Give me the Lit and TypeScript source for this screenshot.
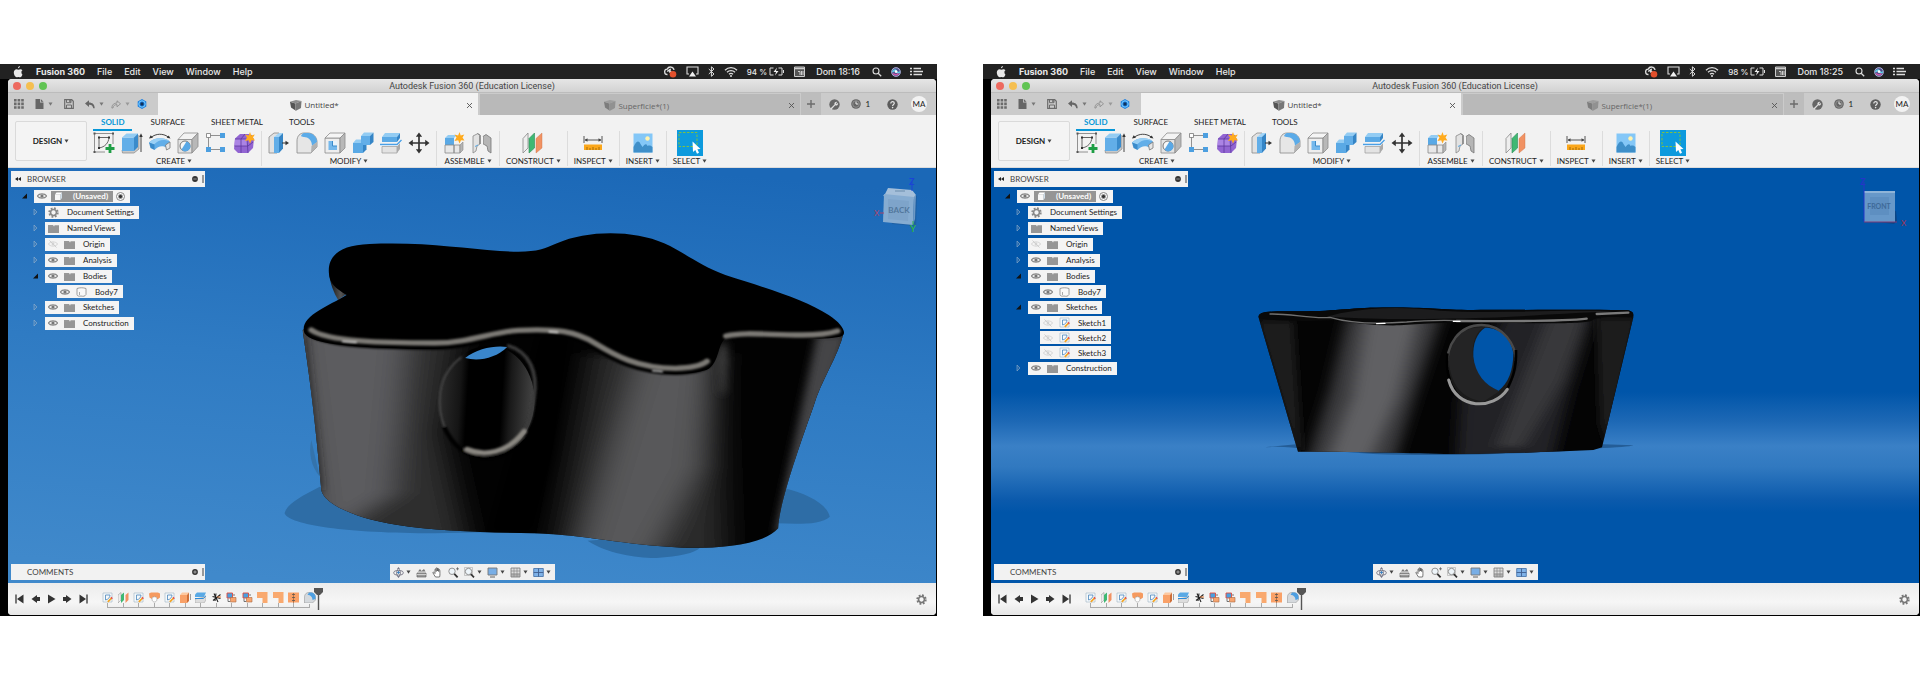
import { LitElement, html, svg, css, TemplateResult, SVGTemplateResult } from "lit";
import { customElement, property } from "lit/decorators.js";

const pic = (w: number, h: number, body: SVGTemplateResult, box = `0 0 ${w} ${h}`): TemplateResult =>
  html`<svg width=${w} height=${h} viewBox=${box} aria-hidden="true">${body}</svg>`;

/* ---------- menu bar glyphs ---------- */
const apple = pic(10, 12, svg`<path fill="#e8e8e8" d="M6.9 0c.1 1-.8 2.2-1.9 2.3C4.900 1.300 5.900.200 6.900 0zM8.400 6.100c0-1.200 1-1.700 1-1.800C8.800 3.500 8 3.300 7.500 3.300c-.9 0-1.600.5-2.100.5-.5 0-1.100-.5-1.900-.5C2.100 3.400.8 4.500.8 6.600c0 2.100 1.500 4.700 2.800 4.700.6 0 1-.4 1.900-.4.8 0 1.100.4 1.800.4 1 0 1.900-1.700 2.200-2.700-.1 0-1.100-.6-1.100-2.500z"/>`);
const cloud = pic(13, 12, svg`<path d="M3.500 8.500a2.700 2.700 0 0 1-.3-5.400A3.600 3.600 0 0 1 10 4M3.500 5.800a1.500 1.500 0 0 1 2.800-.8l1.500 2M7 3.200a1.800 1.800 0 0 0-1 3.200" fill="none" stroke="#ddd" stroke-width="1.300"/><circle cx="9" cy="8.200" r="3.300" fill="#e2502c"/>`);
const airplay = pic(13, 11, svg`<path d="M3 8H1V1h11v7h-2" fill="none" stroke="#ddd" stroke-width="1.100"/><path d="M6.500 5.500 10 10.500H3z" fill="#eee"/>`);
const bluetooth = pic(7, 11, svg`<path d="M.8 3 6 8 3.400 10.300V.8L6 3 .8 8" fill="none" stroke="#ddd" stroke-width="1"/>`);
const wifi = pic(14, 11, svg`<g fill="none" stroke="#ddd" stroke-width="1.300"><path d="M1 4.200a8.500 8.500 0 0 1 12 0M3 6.300a5.600 5.600 0 0 1 8 0M5 8.300a2.900 2.900 0 0 1 4 0"/></g><circle cx="7" cy="10" r="1" fill="#ddd"/>`);
const battery = pic(16, 9, svg`<path d="M4.500 1H1v7h3.500M9.500 1H13v7H9.500" fill="none" stroke="#ddd"/><path d="M8 .5 4.500 5H7l-1 3.500L9.500 4H7z" fill="#eee"/><path d="M14.500 3v3" stroke="#ddd"/>`);
const calendar = pic(11, 11, svg`<path d="M.5 1h10v9.500H.5z" fill="#555" stroke="#ccc"/><path d="M1 2.500h9" stroke="#ccc" stroke-width="1.500"/><path d="M4 5.500h2V9M7.500 5v4M9 5v4" stroke="#ccc" fill="none"/>`);
const search = pic(10, 10, svg`<circle cx="4" cy="4" r="3" fill="none" stroke="#ddd" stroke-width="1.100"/><path d="m6.200 6.200 3 3" stroke="#ddd" stroke-width="1.300"/>`);
const siri = pic(10, 10, svg`<circle cx="5" cy="5" r="4.800" fill="#4a4d8c"/><circle cx="5" cy="5" r="4.300" fill="none" stroke="#c9c9e2" stroke-width=".8"/><path d="M1.500 5c2-3 3.500-2 4-.5S8 6 8.700 4.500" fill="none" stroke="#5cd3e8" stroke-width="1.500"/><path d="M2 6.500c2 1.500 4 1.500 5.500 0" fill="none" stroke="#d354a6" stroke-width="1.500"/><circle cx="5" cy="4.600" r="1.400" fill="#fff"/>`);
const listGlyph = pic(13, 9, svg`<g stroke="#ddd" stroke-width="1.400"><path d="M0 1.500h2M0 4.500h2M0 7.500h2M3.500 1.500H11M3.500 4.500H13M3.500 7.500H12"/></g>`);

/* ---------- application bar ---------- */
const gridGlyph = pic(10, 10, svg`<g fill="#6b6b6b"><path d="M0 0h2.600v2.600H0zM3.600 0h2.600v2.600H3.600zM7.200 0h2.600v2.600H7.200zM0 3.600h2.600v2.600H0zM3.600 3.600h2.600v2.600H3.600zM7.200 3.600h2.600v2.600H7.200zM0 7.200h2.600v2.600H0zM3.600 7.200h2.600v2.600H3.600zM7.200 7.200h2.600v2.600H7.200z"/></g>`);
const fileGlyph = pic(9, 10, svg`<path d="M.5 0h4.500v3.500h3.500V10h-8zM5.800 0 8.500 2.700H5.800z" fill="#666"/>`);
const saveGlyph = pic(10, 10, svg`<path d="M.7.7h7L9.300 2.300v7H.7z" fill="none" stroke="#6b6b6b" stroke-width="1.200"/><path d="M2.500 1v2.700h4.500V1M2.500 9.500V6h5v3.500" fill="none" stroke="#6b6b6b"/><path d="M5.200 1h1.500v2H5.200z" fill="#6b6b6b"/>`);
const undoGlyph = pic(10, 9, svg`<path d="M4 .3 0 3.600 4 7V4.700c2.300-.2 3.700.7 4.300 3.500H9.700C9.700 4.600 7.500 2.500 4 2.500z" fill="#666"/>`);
const redoGlyph = pic(10, 9, svg`<path d="M6 .8 9.500 3.800 6 6.800V4.600C3.800 4.500 2.500 5.500 2 8H.8C.8 4.800 3 3 6 3z" fill="none" stroke="#8a8a8a" stroke-width=".8"/>`);
const jobGlyph = pic(10, 10, svg`<path d="m5 0 4.300 2.500v5L5 10 .7 7.500v-5z" fill="#1c7fe0"/><circle cx="5" cy="5" r="3.200" fill="none" stroke="#7fd0ff"/><circle cx="5" cy="5" r="1.700" fill="#11325a"/>`);
const caret = (c = "#444") => pic(5, 4, svg`<path d="M.5.500h4l-2 3.200z" fill=${c}/>`);
const cube = (o: number) => pic(12, 11, svg`<g opacity=${o}><path d="M0 1.800 5.500 3.500v7L1 7.500z" fill="#555"/><path d="M0 1.800 6 0l5.500 1-6 2.500z" fill="#8c8c8c"/><path d="m5.500 3.500 6-2.500L11 8l-5.500 3z" fill="#777"/></g>`);
const closeGlyph = pic(7, 7, svg`<path d="m1 1 5 5M6 1 1 6" stroke="#555" stroke-width=".9"/>`);
const plusGlyph = pic(8, 8, svg`<path d="M4 0v8M0 4h8" stroke="#6b6b6b" stroke-width="1.400"/>`);
const wrench = pic(11, 11, svg`<circle cx="5.500" cy="5.500" r="5.200" fill="#666"/><path d="m1.200 9.800 4.300-4.300a2 2 0 0 1 2.800-2.500L7 4.300l.7.700L9 3.800A2 2 0 0 1 6.300 6.300l-3.800 4.200z" fill="#ddd"/>`);
const clock = pic(10, 10, svg`<circle cx="5" cy="5" r="4.800" fill="#666"/><circle cx="5" cy="5" r="3.300" fill="none" stroke="#999" stroke-width=".8"/><path d="M5 2.500V5h2.200" fill="none" stroke="#eee"/>`);
const help = pic(11, 11, svg`<circle cx="5.500" cy="5.500" r="5.200" fill="#5c5c5c"/><path d="M3.800 4.500c0-2.500 3.500-2.200 3.500-.2 0 1.200-1.700 1.200-1.700 2.700" fill="none" stroke="#e4e4e4" stroke-width="1.200"/><circle cx="5.600" cy="8.600" r=".8" fill="#e4e4e4"/>`);

/* ---------- ribbon tools, 22 x 22 ---------- */
const tool = (b: SVGTemplateResult) => pic(22, 22, b);
const tools: Record<string, TemplateResult> = {
  sketch: tool(svg`<path d="M2 1.500h17.500M1.500 2v17M2 20h10M20 2v10" stroke="#777" fill="none" stroke-width=".8"/><g fill="#555"><path d="M.5.500h2v2h-2zM19 .5h2v2h-2zM.5 19h2v2h-2z"/></g><path d="M6 16V5.500h10C15.500 11 12 15 6 16z" fill="none" stroke="#555" stroke-width=".9"/><g fill="#333"><path d="M5 4.500h2v2H5zM15 4.500h2v2h-2zM5 15h2v2H5z"/></g><path d="M17 12v9M12.500 16.500h9" stroke="#1e9e45" stroke-width="2.800"/>`),
  extrude: tool(svg`<path d="M1 18 1.500 21H13l5-4V3" fill="#c9c9c9" stroke="#888" stroke-width=".7"/><path d="M1 5.500h12V19H1z" fill="#62aee8"/><path d="M1 5.500 5.500 1.500H17l-4 4z" fill="#93ccf3"/><path d="m13 5.500 4-4V15l-4 4z" fill="#3a8bcb"/><path d="M20 20V4" stroke="#333" stroke-width=".9"/><path d="M18.300 5 20 1.200 21.700 5z" fill="#333"/>`),
  revolve: tool(svg`<path d="M2 5.500C7 1.300 14 1.300 19 4.800" fill="none" stroke="#333" stroke-width=".9"/><path d="m0 6.500 1.700-3.200L4 5.700zM21.500 6.500l-3.800-.8 2-2.200z" fill="#333"/><path d="M0 10.500C5 5 16 5 21 9.500L18 16c-4-3-9-2-12.500 2z" fill="#62aee8"/><path d="M0 10.500C5 5 16 5 21 9.500c-6-2.500-11-2-16 3z" fill="#9ad0f5"/><path d="m0 10.500 5.500 2V18L1.500 16z" fill="#3a8bcb"/><path d="m16.500 13 4.500-3v6l-3.500 2z" fill="#e6e6e6" stroke="#777" stroke-width=".8"/>`),
  hole: tool(svg`<path d="M1 7.500h14V21H1z" fill="#e3e3e3" stroke="#8c8c8c" stroke-width=".8"/><path d="m1 7.500 6-6.500h14l-6 6.500z" fill="#f3f3f3" stroke="#8c8c8c" stroke-width=".8"/><path d="m15 7.500 6-6.500v13.500L15 21z" fill="#b8b8b8" stroke="#8c8c8c" stroke-width=".8"/><circle cx="8" cy="14" r="5" fill="#f8f8f8" stroke="#777"/><path d="M9.500 9.500a5 5 0 1 1-5 8z" fill="#59a8e6"/>`),
  pattern: tool(svg`<path d="M3.500 3.500h14M3.500 3.500v14h14" fill="none" stroke="#777" stroke-width=".8"/><path d="M1.500 1.500h4v4h-4z" fill="#fff" stroke="#777" stroke-width=".8"/><path d="M15 1h5v5h-5zM1 15h5v5H1zM15 15h5v5h-5z" fill="#4c9fe0"/>`),
  form: tool(svg`<path d="M2 6.500 7 2h9l5 5-1 9-5 5H5l-4-4z" fill="#9265d2"/><path d="M2 7h12v7H1.500z" fill="#ab84e4"/><path d="M1.500 14H15l5-4M8 7v14M14 7l1 14M2 7h12l5-4M8 7l4-5" fill="none" stroke="#5d38a0" stroke-width=".8"/><path d="m17 0 1.200 3.500L21.800 2.500 20 5.500l2 3-3.500-.3L17 11.500 15.700 8.300 12 9l2-3.500-2-3 3.600 1z" fill="#ffab1e"/>`),
  pressPull: tool(svg`<path d="M1 5 6 1h5L9 21H1z" fill="#e2e2e2" stroke="#888" stroke-width=".8"/><path d="m6 5 5-4h4l-4 4z" fill="#a2d5f8"/><path d="M6 5h5v16H6z" fill="#62aee8"/><path d="m11 5 4-4v15.500L11 21z" fill="#3585c6"/><path d="M14 11h4" stroke="#333"/><path d="m17.500 8.800 3.500 2.200-3.500 2.200z" fill="#333"/>`),
  fillet: tool(svg`<path d="M1 21V9c0-5 3-8 7-8h4c5 0 9 4 9 9v5l-6 6z" fill="#e6e6e6" stroke="#888" stroke-width=".8"/><path d="M8 1h4c5 0 9 4 9 9l-5 4c0-6-4-9-8-9 3 0-3 0-3-1 1-2 1-2 3-3z" fill="#5babe8"/><path d="m15.500 14 5.500-4v5l-6 6z" fill="#b2b2b2"/>`),
  shell: tool(svg`<path d="M1 6h15v15H1z" fill="#eee" stroke="#8c8c8c" stroke-width=".8"/><path d="m1 6 5-5h15l-5 5z" fill="#f5f5f5" stroke="#8c8c8c" stroke-width=".8"/><path d="m16 6 5-5v15l-5 5z" fill="#b8b8b8" stroke="#8c8c8c" stroke-width=".8"/><path d="M4.500 9h8.500v9H4.500z" fill="#74b8ec"/><path d="M8.500 9H13v5H8.500z" fill="#e8f3fb"/><path d="M8.500 9v5H13" fill="none" stroke="#3a8bcb"/>`),
  combine: tool(svg`<path d="M9 4h9v9H9z" fill="#62aee8"/><path d="m9 4 3-3.500h9.500L18 4z" fill="#93ccf3"/><path d="m18 4 3.500-3.500V10L18 13z" fill="#3585c6"/><path d="M1 11h10v10H1z" fill="#5aa9e5"/><path d="m1 11 3-3.500h5V11h2z" fill="#93ccf3"/><path d="M11 13h3.500v4.500L11 21z" fill="#3585c6"/>`),
  split: tool(svg`<path d="M2 5 5 1h15l-3 4z" fill="#93ccf3"/><path d="M2 5h15v5H2z" fill="#5aa9e5"/><path d="m17 5 3-4v5l-3 4z" fill="#3585c6"/><path d="M0 13h17l4-4.500" fill="none" stroke="#fff" stroke-width="2"/><path d="M0 12.500h17L21.500 8" fill="none" stroke="#4aa0e6" stroke-width="1.400"/><path d="M2 14.500h15V21H2z" fill="#e3e3e3" stroke="#999" stroke-width=".7"/><path d="m17 14.500 3-3.500v6l-3 4z" fill="#aaa"/>`),
  move: tool(svg`<path d="M11 3v16M3 11h16" stroke="#333" stroke-width="1.700"/><path d="m11 .5 3.200 4.300H7.800zM11 21.500l3.200-4.300H7.800zM.500 11l4.300-3.200v6.400zM21.500 11l-4.300-3.200v6.400z" fill="#333"/>`),
  component: tool(svg`<path d="M2 6h9v7H2z" fill="#5aa9e5"/><path d="m2 6 3-3h9l-3 3z" fill="#93ccf3"/><path d="M2 13h9v8H2zM11 13h6v8h-6z" fill="#e8e8e8" stroke="#888" stroke-width=".8"/><path d="m17 13 3-3v8l-3 3z" fill="#b5b5b5" stroke="#888" stroke-width=".6"/><path d="m16.500 0 1.200 3.500 3.600-1-1.800 3 2 3-3.500-.3-1.500 3.300-1.300-3.200-3.700.7 2-3.500-2-3 3.600 1z" fill="#ffab1e"/>`),
  joint: tool(svg`<path d="m2 4 5-2.500 2 2V12l-3 2-1 5-3 2z" fill="#e2e2e2" stroke="#888" stroke-width=".8"/><path d="m7 1.500 2 2V12" fill="none" stroke="#666"/><path d="m20 6-5-3.500-3 2V12l4 2 1 5 3 2z" fill="#b5b5b5" stroke="#777" stroke-width=".8"/><path d="M11.500 4.500v8l4 3" fill="none" stroke="#f5f5f5"/><path d="M4 14.500 7 13" stroke="#5aa9e5"/>`),
  plane: tool(svg`<path d="M1 6.500 6 1v15l-5 5z" fill="#eee" stroke="#888" stroke-width=".8"/><path d="M7 6.500 12.500 1v15L7 21z" fill="#3fb873" stroke="#2b8c55" stroke-width=".6"/><path d="M14 6.500 20 1v15l-6 5z" fill="#f19263" stroke="#cd7245" stroke-width=".4"/>`),
  measure: tool(svg`<path d="M2 4v7M20 4v7M3 8h16" stroke="#444" stroke-width=".9"/><path d="m2.500 8 3-1.800v3.600zM19.500 8l-3-1.800v3.600z" fill="#444"/><path d="M2 12.500h18V18H2z" fill="#fba71b"/><path d="M5 15v3M8 16v2M11 15v3M14 16v2M17 15v3" stroke="#915d05" stroke-width=".8"/>`),
  insert: tool(svg`<path d="M1.500 1.500h19v19h-19z" fill="#84c7f7"/><circle cx="15.500" cy="6.500" r="2.200" fill="#fff3b0"/><path d="M1.500 15c3-6 5-7 7-3l2 3c2-3 4-4 5-1 2-1 4 0 5 1v5.500h-19z" fill="#3f8fc9"/>`),
  select: pic(26, 26, svg`<path d="M0 0h26v26H0z" fill="#0d9add"/><path d="M2 2.500h18v14H2z" fill="none" stroke="#7fc043" stroke-dasharray="2.500 1.500"/><path d="M15.500 11.500 16 22l2.300-2 1.700 3.700 2-1-1.600-3.400 3.100-.3z" fill="#fff"/>`),
};

/* ---------- browser tree ---------- */
const eye = pic(10, 8, svg`<path d="M.4 4C2 1.200 8 1.200 9.600 4 8 6.800 2 6.800.4 4z" fill="#eee" stroke="#888" stroke-width="1.100"/><circle cx="5" cy="4" r="1.600" fill="#777"/>`);
const eyeOff = pic(10, 8, svg`<g opacity=".35"><path d="M.4 4C2 1.200 8 1.200 9.600 4 8 6.800 2 6.800.4 4z" fill="none" stroke="#999"/><circle cx="5" cy="4" r="1.400" fill="#999"/><path d="m1.500.5 7 7" stroke="#888"/></g>`);
const folder = pic(11, 9, svg`<path d="M0 1h5l1 1.500V9H0z" fill="#999"/><path d="M0 2.800h6L6.600 1.300H11V9H0z" fill="#969696"/>`);
const gear = (c: string) => pic(11, 11, svg`<circle cx="5.500" cy="5.500" r="4.200" fill="none" stroke=${c} stroke-width="2" stroke-dasharray="1.800 1.500"/><circle cx="5.500" cy="5.500" r="2.900" fill="none" stroke=${c} stroke-width="1.500"/>`);
const bodyGlyph = pic(11, 10, svg`<path d="M1 1.500c3-1 6-1 9 0v6c-1 2-3 2-5 1.500-2 .5-4 0-4-1.500z" fill="#f8f8f8" stroke="#888" stroke-width=".8"/><path d="M3.500 5v3" stroke="#888" stroke-width=".7"/>`);
const docGlyph = pic(9, 9, svg`<path d="M1 2.500h5.500V8H1z" fill="#f7f7f7"/><path d="m1 2.500 1.500-2H8l-1.500 2z" fill="#fff"/><path d="m6.500 2.500 1.500-2V6L6.500 8z" fill="#cfdde8"/>`);
const sketchMini = pic(11, 11, svg`<path d="M1 1h9v9H1z" fill="#f6f9fb" stroke="#9fb2c2" stroke-width=".6"/><path d="M3.500 8V3h4.500C8 5.500 6 7.500 3.500 8z" fill="none" stroke="#4b86bd" stroke-width=".8"/><path d="m5.800 9.900 3.700-3.700" stroke="#f4a524" stroke-width="1.700"/><path d="m9.200 6.500 1-1" stroke="#e5484d" stroke-width="1.800"/>`);
const closed = pic(5, 8, svg`<path d="M1 1v6l3-3z" fill="#5a87b4" fill-opacity=".35" stroke="#a9bdd0" stroke-opacity=".7" stroke-width=".7"/>`);
const opened = pic(5, 8, svg`<path d="M5 1.500v5H0z" fill="#111"/>`);
const rewind = pic(6, 4, svg`<path d="M3 0v4L0 2zM6 0v4L3 2z" fill="#222"/>`);
const minus = pic(6, 6, svg`<circle cx="3" cy="3" r="2.900" fill="#333"/><path d="M1.300 3h3.400" stroke="#aaa" stroke-width=".8"/>`);
const plusDot = pic(6, 6, svg`<circle cx="3" cy="3" r="2.900" fill="#333"/><path d="M1.300 3h3.400M3 1.300v3.400" stroke="#bbb" stroke-width=".8"/>`);

/* ---------- navigation bar ---------- */
const nav: Record<string, TemplateResult> = {
  orbit: pic(11, 11, svg`<ellipse cx="5.500" cy="5.800" rx="4.800" ry="2.300" fill="none" stroke="#667" stroke-width=".8"/><path d="M5.500 1.500C3 4 3 8 5.500 9.800 8 8 8 4 5.500 1.500z" fill="none" stroke="#667" stroke-width=".8"/><path d="M5.500 4v3M4 5.500h3" stroke="#3a7fc0" stroke-width=".9"/><path d="m5.500 0 1.500 2H4zM5.500 11 7 9H4z" fill="#778"/>`),
  look: pic(11, 11, svg`<path d="M1 6h9v4H1z" fill="#999" stroke="#666" stroke-width=".7"/><path d="M2 4.500 4 2l1.500 2L8 2l1.500 2.500z" fill="#777"/><path d="M1 7.500h9" stroke="#ddd" stroke-width=".8"/>`),
  pan: pic(11, 11, svg`<path d="M3.500 10C2.500 8.500 1.500 7 .8 5.500c.7-.6 1.400-.1 2.200 1V2.200c.8-.6 1.200 0 1.200 2.300V1c.7-.6 1.300-.2 1.300 3V1.300c.7-.5 1.300 0 1.200 3.200V2.500c.8-.4 1.200.1 1.200 2.500C8 7.500 8 9 7.500 10z" fill="#fff" stroke="#555" stroke-width=".8"/>`),
  zoom: pic(11, 11, svg`<circle cx="4" cy="4.300" r="3.200" fill="#eef5fa" stroke="#888" stroke-width=".9"/><path d="m6.300 6.800 3.300 3.500" stroke="#333" stroke-width="1.800"/><path d="M8 1.800h3M9.500.3v3" stroke="#555" stroke-width=".7"/>`),
  fit: pic(11, 11, svg`<path d="M.5.500h8v8h-8z" fill="none" stroke="#aaa" stroke-width=".6"/><circle cx="4.500" cy="4.500" r="3.200" fill="#eef5fa" stroke="#888" stroke-width=".9"/><path d="m6.800 7 3.200 3.400" stroke="#333" stroke-width="1.800"/>`),
  display: pic(11, 11, svg`<path d="M1 1h9v7H1z" fill="#78aee6" stroke="#777" stroke-width=".9"/><path d="M3 10h5" stroke="#777" stroke-width="1.200"/>`),
  grid: pic(11, 11, svg`<path d="M1 1h9v9H1z" fill="#ddd" stroke="#777" stroke-width=".8"/><path d="M1 4h9M1 7h9M4 1v9M7 1v9" stroke="#888" stroke-width=".7"/><path d="M1 6.500h9V10H1z" fill="#888" opacity=".5"/>`),
  views: pic(11, 11, svg`<path d="M.7 1.500h9.600v8H.7z" fill="#7fb2e8" stroke="#3f6da6" stroke-width=".8"/><path d="M5.500 1.500v8M.7 5.500h9.600" stroke="#3f5f8f" stroke-width=".9"/>`),
};

/* ---------- timeline ---------- */
const play: [string, TemplateResult][] = [
  ["Go to start", pic(9, 10, svg`<path d="M8.500.500v9L2 5z" fill="#333"/><path d="M1 .5v9" stroke="#333" stroke-width="1.300"/>`)],
  ["Step back", pic(9, 10, svg`<path d="M6 1v8L.5 5z" fill="#333"/><path d="M6 5h3" stroke="#333" stroke-width="4"/>`)],
  ["Play", pic(9, 10, svg`<path d="M1 .5v9L8.500 5z" fill="#333"/>`)],
  ["Step forward", pic(9, 10, svg`<path d="M3 1v8l5.500-4z" fill="#333"/><path d="M0 5h3" stroke="#333" stroke-width="4"/>`)],
  ["Go to end", pic(9, 10, svg`<path d="M.5.500v9L7 5z" fill="#333"/><path d="M8 .5v9" stroke="#333" stroke-width="1.300"/>`)],
];
const f = (b: SVGTemplateResult) => pic(11, 11, b);
const fSketch = sketchMini;
const fPlane = f(svg`<path d="m0 3 3-2.500V8L0 11z" fill="#eee" stroke="#999" stroke-width=".6"/><path d="m3 3 3-2.500V8l-3 3z" fill="#3fb873"/><path d="m7.500 3 3-2.500V8l-3 3z" fill="#f19263"/>`);
const fLoft = f(svg`<path d="M0 1.500 2 .5h7l2 1v4L9 7H8C8 4 3 4 3 7L.5 5.500z" fill="#f59a5f"/><path d="M3 7c0-3 5-3 5 0 0 4-5 4-5 0z" fill="#fff" stroke="#999" stroke-width=".6"/>`);
const fExtrude = f(svg`<path d="M0 3h7v8H0z" fill="#f9a168"/><path d="m0 3 2-2.500h7L7 3z" fill="#fdc8a0"/><path d="m7 3 2-2.500V9l-2 2z" fill="#cf6f38"/><path d="M10.500 2v6" stroke="#777" stroke-width=".7"/>`);
const fSplit = f(svg`<path d="M0 2.500 2 .5h9L9 5H0z" fill="#5aa9e5"/><path d="m0 7 10-2 1-1v4l-2 3H0z" fill="#ddd" stroke="#999" stroke-width=".5"/><path d="M0 6.500h8.500l2.500-3" fill="none" stroke="#2e8bd8"/>`);
const fTrim = f(svg`<path d="M3 1.500 7 10M9.500 2.500 2 8.500M1.500 4.500l8 2M5 1.500 4 9" stroke="#222" stroke-width="1.100"/><path d="M6 5h4" stroke="#e07b3c"/>`);
const fCombine = f(svg`<path d="M1 1h5.500v5H1z" fill="#4a9fe0" stroke="#e04a3c" stroke-width=".9"/><path d="M4.500 5.500H10V10H4.500z" fill="#f7a570" stroke="#a86a43" stroke-width=".6"/><path d="M2 6.500v3h2M8 4V2" fill="none" stroke="#555" stroke-width=".8"/>`);
const fFace = f(svg`<path d="M0 0h10.500v11H5.500V6H0z" fill="#f9a96f"/>`);
const fStitch = f(svg`<path d="M0 .5h11v10H0z" fill="#f9a168"/><path d="M5.500 1v10" stroke="#8a4d22" stroke-width=".6"/><path d="M4 2.500h3M4 5.500h3M4 8.500h3" stroke="#555" stroke-width=".8"/>`);
const fFillet = pic(12, 11, svg`<path d="M.5 11V5C.5 2 2.500.5 5 .5h1.500c3 0 5 2 5 4.500V8l-3 3z" fill="#d5d9dd" stroke="#999" stroke-width=".6"/><path d="M5 .5h1.500c3 0 5 2 5 4.500V7l-3 1c0-3-2-5-5-5z" fill="#4d9fe2"/>`);
const features = [fSketch, fPlane, fSketch, fLoft, fSketch, fExtrude, fSplit, fTrim, fCombine, fCombine, fFace, fFace, fStitch, fFillet];
const marker = pic(9, 22, svg`<path d="M0 0h9v4L6 7H3L0 4z" fill="#555"/><path d="M4.500 5v17" stroke="#555" stroke-width="1.400"/>`);

/* ---------- 3D scenes ---------- */
const rimBack = "M108 330C150 365 300 369 430 369 520 369 580 335 650 331 750 325 800 335 850 370 900 405 960 445 1060 445 1110 444 1130 435 1142 424";
const rimBackRight = "M1192 348C1240 335 1300 345 1390 345 1440 345 1465 340 1483 333";
const sceneBack = svg`
  <defs>
    <linearGradient id="sky" x1=".6" y1="0" x2=".4" y2="1"><stop offset="0" stop-color="#1b68b7"/><stop offset=".5" stop-color="#2f7bc3"/><stop offset="1" stop-color="#4089cb"/></linearGradient>
    <linearGradient id="tail" x1="155" y1="0" x2="205" y2="0" gradientUnits="userSpaceOnUse"><stop offset="0" stop-color="#111"/><stop offset=".6" stop-color="#555"/><stop offset="1" stop-color="#222"/></linearGradient>
    <linearGradient id="tube" x1="440" y1="0" x2="690" y2="0" gradientUnits="userSpaceOnUse"><stop offset="0" stop-color="#2c2c2c"/><stop offset=".22" stop-color="#151515"/><stop offset=".3" stop-color="#000"/><stop offset=".66" stop-color="#000"/><stop offset=".75" stop-color="#191919"/><stop offset="1" stop-color="#454545"/></linearGradient>
    <filter id="b40" x="-50%" y="-30%" width="200%" height="160%"><feGaussianBlur stdDeviation="40 14"/></filter>
    <filter id="b12" x="-100%" y="-30%" width="300%" height="160%"><feGaussianBlur stdDeviation="13"/></filter>
    <filter id="b2" x="-20%" y="-50%" width="140%" height="200%"><feGaussianBlur stdDeviation="2.500"/></filter>
    <clipPath id="side"><path d="M85 330 240 260 1200 300 1500 335C1485 410 1440 480 1420 560 1370 720 1330 860 1328 925 1290 975 1180 985 1080 983 920 975 830 945 690 940 560 936 440 935 330 914 220 895 140 850 134 810 120 620 105 480 85 330z"/></clipPath>
  </defs>
  <path d="M0 160h950v430H0z" fill="url(#sky)"/>
  <g transform="translate(270 220) scale(.38265 .33333)">
    <path d="M130 800C80 830 45 850 38 880 50 915 200 940 430 940L600 936 300 850z" fill="#2e6da6"/>
    <path d="M108 660C100 700 108 740 130 770z" fill="#3473ac"/>
    <path d="M830 962C880 1000 960 1015 1010 1014 1070 1010 1110 1000 1125 982L960 950z" fill="#2e6da6"/>
    <path d="M1345 805C1400 820 1455 850 1463 890 1440 915 1380 912 1325 910z" fill="#2e6da6"/>
    <path d="M154 150C155 190 168 220 178 240L208 215 205 180z" fill="url(#tail)"/>
    <g clip-path="url(#side)">
      <path d="M60 250h1460v750H60z" fill="#020202"/>
      <g filter="url(#b40)">
        <path d="M30 300H500L450 640 520 1000H90z" fill="#2e2e2f"/>
        <path d="M60 300H360L320 820 130 960z" fill="#5c5c5e"/>
        <path d="M840 400H1170L1190 1000H740z" fill="#29292a"/>
        <path d="M970 400H1150L1120 740 1000 1000H810z" fill="#58585a"/>
      </g>
      <g filter="url(#b12)">
        <path d="M1430 340h80L1350 940h-30z" fill="#454547"/>
        <path d="M1172 370h22l-6 150h-10z" fill="#484848"/>
        <path d="M700 340h90L745 700 690 940H570L640 640z" fill="#000"/>
        <path d="M75 340h16l44 470h-16z" fill="#202020"/>
      </g>
    </g>
    <path d="M154 160C150 110 180 75 260 72 400 65 500 85 600 93 690 100 710 90 750 70 830 30 950 30 1030 70 1080 95 1120 135 1190 165 1300 205 1400 240 1460 285 1500 315 1510 345 1490 350 1440 362 1300 355 1200 350 1165 360 1180 430 1140 450 1080 470 1010 462 960 440 900 410 860 370 800 345 740 330 640 335 560 362 500 385 430 390 360 386 230 382 110 375 90 340 75 290 150 260 200 225 170 205 156 190 154 160z" fill="#000"/>
    <g fill="none" stroke="#000" stroke-width="26" stroke-linecap="round" filter="url(#b2)" transform="translate(0 7)"><path d=${rimBack} /></g>
    <g fill="none" stroke="#7b7974" stroke-width="16" stroke-linecap="round" filter="url(#b2)"><path d=${rimBack} /><path d=${rimBackRight} /></g>
    <g fill="none" stroke="#fff" stroke-width="4" stroke-linecap="round" filter="url(#b2)"><path d="M190 364 225 367M730 335 752 337M1000 452 1025 455"/></g>
    <ellipse cx="567" cy="545" rx="124" ry="168" fill="url(#tube)" transform="rotate(3 567 545)"/>
    <path d="M510 414C540 385 590 375 620 381 590 415 545 425 510 414z" fill="#3a86cb"/>
    <g fill="none" filter="url(#b2)">
      <path d="M620 376C680 395 700 460 690 530 685 580 680 610 660 640" stroke="#3a3a3a" stroke-width="10"/>
      <path d="M500 412C420 480 435 600 480 670" stroke="#505050" stroke-width="4"/>
      <path d="M455 620C500 735 600 745 672 655" stroke="#000" stroke-width="12"/>
      <path d="M515 688C560 710 620 700 664 635" stroke="#8a8781" stroke-width="15" stroke-linecap="round"/>
    </g>
  </g>`;

const sceneFront = svg`
  <defs>
    <linearGradient id="floor" x1="0" y1="168" x2="0" y2="583" gradientUnits="userSpaceOnUse"><stop offset="0" stop-color="#0055a9"/><stop offset=".54" stop-color="#0055a9"/><stop offset=".61" stop-color="#1d68b5"/><stop offset=".67" stop-color="#3a80c6"/><stop offset=".72" stop-color="#3179c0"/><stop offset=".8" stop-color="#0b5aac"/><stop offset=".83" stop-color="#0055a9"/></linearGradient>
    <filter id="s30" x="-50%" y="-30%" width="200%" height="160%"><feGaussianBlur stdDeviation="22 8"/></filter>
    <filter id="s10" x="-50%" y="-30%" width="200%" height="160%"><feGaussianBlur stdDeviation="12"/></filter>
    <filter id="s2" x="-20%" y="-200%" width="140%" height="500%"><feGaussianBlur stdDeviation="1.800"/></filter>
    <clipPath id="front"><path d="M55 80C60 65 80 63 180 64 300 64 330 52 450 52 560 52 600 60 700 60 900 60 1000 58 1150 60 1180 60 1185 70 1178 90L1086 472 1060 480C900 487 750 492 640 492 500 490 400 485 174 485z"/></clipPath>
  </defs>
  <path d="M0 160h950v430H0z" fill="url(#floor)"/>
  <g transform="translate(257 290) scale(.33333)">
    <path d="M50 474C100 468 150 470 200 478L400 492C600 500 900 492 1090 474 1150 472 1180 468 1180 466L1000 460H200z" fill="#1d5187" opacity=".75"/>
    <g clip-path="url(#front)">
      <path d="M0 0h1260v540H0z" fill="#040404"/>
      <g filter="url(#s30)">
        <path d="M320 90H600L530 300 460 520H200L270 300z" fill="#3a3a3c"/>
        <path d="M380 90H530L470 320 390 500H270L340 320z" fill="#606063"/>
        <path d="M660 330 800 60H1060L990 300 940 500H650z" fill="#242426"/>
        <path d="M920 90H1040L970 270 850 470H770z" fill="#39393b"/>
      </g>
      <g filter="url(#s10)">
        <path d="M50 90H160L185 480H165z" fill="#1c1c1c"/>
        <path d="M1070 80 1190 80 1100 470 1080 400z" fill="#1b1b1c"/>
      </g>
      <path d="M50 82C60 60 80 60 180 62 300 62 330 50 450 50 560 50 600 58 700 58L1170 58C1190 70 1180 85 1160 82 1100 80 1070 80 1055 92 1030 102 900 100 800 99 650 95 560 100 480 106 400 108 330 98 290 90 200 95 100 95 50 82z" fill="#090909"/>
      <path d="M300 70C400 50 500 50 600 62 750 72 950 58 1120 64 900 74 800 84 600 86 500 88 400 88 260 80z" fill="#1c1c1d"/>
    </g>
    <g fill="none" stroke-linecap="round" filter="url(#s2)">
      <path d="M90 72C150 70 220 88 270 82 330 100 420 102 500 96 560 90 620 90 700 93" stroke="#707070" stroke-width="4"/>
      <path d="M650 93C800 93 960 96 1040 86M1070 72 1165 68" stroke="#7a7a7a" stroke-width="7"/>
      <path d="M410 101 435 100M640 94 660 94" stroke="#fff" stroke-width="4"/>
    </g>
    <ellipse cx="724" cy="223" rx="100" ry="118" fill="#1b1b1b"/>
    <path d="M625 200C630 290 670 325 730 335L780 302C720 280 690 210 700 165 705 140 715 120 735 112 660 110 625 150 625 200z" fill="#242425"/>
    <path d="M735 113C710 130 698 160 700 200 705 250 735 285 776 302 805 280 820 240 820 190 812 140 775 112 735 113z" fill="#0055a9"/>
    <g fill="none" filter="url(#s2)">
      <path d="M622 240C615 160 660 105 725 105 790 105 828 165 828 215" stroke="#4a4a4a" stroke-width="7"/>
      <path d="M622 190C618 230 622 250 630 270M828 180C830 240 815 270 800 300" stroke="#000" stroke-width="8"/>
      <path d="M626 270C650 360 760 360 802 298" stroke="#999" stroke-width="9" stroke-linecap="round"/>
    </g>
  </g>`;

const cubeBack = html`<svg class="cube" width="54" height="66" viewBox="871 172 54 66" role="img" aria-label="Back view">
  <path d="m888 190 4 34 24 2 1-30z" fill="#1d5690" opacity=".5"/>
  <path d="m885 194 3-6 24 2 4 5-1 4-32-3z" fill="#a4bfda"/><path d="m884 194 30 3-1 28-30-3z" fill="#86acd1"/><path d="m914 197 2-3-1 25-2 6z" fill="#6d98c4"/>
  <path d="m888 199 21 2-1 20-20-2z" fill="#7ea4ca"/><path d="M895 191h10" stroke="#6a8cab"/>
  <path d="M912 182v9" stroke="#1b44d6"/><text x="909" y="185" font-size="9" font-weight="700" fill="#1b44d6">Z</text>
  <text x="874" y="216" font-size="8" fill="#b04468">X</text><path d="M880 213h4" stroke="#b04468"/>
  <path d="M913 221v4" stroke="#2db24a"/><text x="910" y="232" font-size="9" font-weight="700" fill="#2db24a">Y</text>
  <text x="899" y="213" font-size="8" text-anchor="middle" font-weight="700" fill="#52779c">BACK</text></svg>`;
const cubeFront = html`<svg class="cube" width="54" height="66" viewBox="871 172 54 66" role="img" aria-label="Front view">
  <path d="m879 220 32 4 3-3-1-10z" fill="#123c70" opacity=".6"/>
  <path d="M881 191h31v31h-31z" fill="#6798c9"/><path d="M881 191h31v2h-31z" fill="#8fb4d8"/><path d="M887 197h19v18h-19z" fill="#5e8fc1"/>
  <path d="M881 182v40" stroke="#2436c8"/><path d="M881 222h33" stroke="#7f3a77"/>
  <text x="877" y="185" font-size="9" font-weight="700" fill="#2436c8">Z</text><text x="918" y="226" font-size="8" fill="#a8324f">X</text>
  <text x="896" y="209" font-size="7" text-anchor="middle" font-weight="700" fill="#3f6a99">FRONT</text></svg>`;

interface Node { label: string; level: number; open?: boolean; leaf?: boolean; vis?: "on" | "off"; icon: TemplateResult; root?: boolean }
const head: Node[] = [
  { label: "(Unsaved)", level: 0, open: true, vis: "on", icon: docGlyph, root: true },
  { label: "Document Settings", level: 1, icon: gear("#888") },
  { label: "Named Views", level: 1, icon: folder },
  { label: "Origin", level: 1, vis: "off", icon: folder },
  { label: "Analysis", level: 1, vis: "on", icon: folder },
  { label: "Bodies", level: 1, open: true, vis: "on", icon: folder },
  { label: "Body7", level: 2, leaf: true, vis: "on", icon: bodyGlyph },
];
const tail: Node = { label: "Construction", level: 1, vis: "on", icon: folder };
const treeBack: Node[] = [...head, { label: "Sketches", level: 1, vis: "on", icon: folder }, tail];
const treeFront: Node[] = [
  ...head,
  { label: "Sketches", level: 1, open: true, vis: "on", icon: folder },
  ...["Sketch1", "Sketch2", "Sketch3"].map((label): Node => ({ label, level: 2, leaf: true, vis: "off", icon: sketchMini })),
  tail,
];

const ribbon: [string, string[]][] = [
  ["CREATE", ["sketch", "extrude", "revolve", "hole", "pattern", "form"]],
  ["MODIFY", ["pressPull", "fillet", "shell", "combine", "split", "move"]],
  ["ASSEMBLE", ["component", "joint"]],
  ["CONSTRUCT", ["plane"]],
  ["INSPECT", ["measure"]],
  ["INSERT", ["insert"]],
  ["SELECT", ["select"]],
];

@customElement("fusion-screen")
class FusionScreen extends LitElement {
  @property() battery = "";
  @property() time = "";
  @property() view: "back" | "front" = "back";

  static styles = css`
    :host { display: block; flex: 1; min-width: 0; font-family: Lato, "Open Sans", sans-serif; font-size: 8px; line-height: 12px; color: #222; background: #000; }
    * { box-sizing: border-box; }
    svg { display: block; flex: none; }
    button { font: inherit; color: inherit; background: none; border: 0; padding: 0; margin: 0; display: flex; align-items: center; white-space: nowrap; }
    ul { list-style: none; margin: 0; padding: 0; }
    .menubar { display: flex; align-items: center; height: 15px; padding: 0 14px 0 13px; background: #222; color: #e8e8e8; font-family: Inter, sans-serif; font-size: 9px; font-weight: 500; }
    .menus { display: flex; gap: 12px; margin-left: 13px; flex: 1; }
    .menus .app { font-weight: 700; }
    .status { display: flex; align-items: center; gap: 9px; white-space: nowrap; }
    .power { display: flex; align-items: center; gap: 2px; font-size: 8px; }
    .clock { margin: 0 3px 0 2px; }
    .window { margin: 0 1px 1px 8px; border-radius: 4px; overflow: hidden; background: #f2f2f2; }
    .titlebar { display: grid; grid-template-columns: 1fr auto 1fr; align-items: center; height: 14px; padding: 0 5px; background: linear-gradient(#e6e6e6, #d2d2d2); border-bottom: 1px solid #bcbcbc; font-family: Roboto, sans-serif; font-size: 9px; color: #444; }
    .lights { display: flex; gap: 5px; }
    .light { width: 8px; height: 8px; border-radius: 50%; background: #ed6a5f; }
    .light.min { background: #f5bf50; }
    .light.max { background: #61c454; }
    .appbar { display: flex; height: 22px; background: #cbcbcb; }
    .quick { display: flex; align-items: center; width: 150px; padding-left: 6px; gap: 11px; }
    .quick button { gap: 4px; }
    .quick .history { display: flex; gap: 7px; }
    .doctab { flex: 1; display: flex; align-items: center; padding: 2px 5px 0; color: #444; min-width: 0; }
    .doctab.active { background: #f2f2f2; margin-right: 2px; }
    .doctab.idle { background: #b9b9b9; color: #666; margin-top: 1px; }
    .doctab .name { flex: 1; justify-content: center; gap: 2px; font-family: "Open Sans", sans-serif; }
    .add { width: 20px; justify-content: center; background: #bdbdbd; margin-left: 1px; }
    .account { display: flex; align-items: center; gap: 13px; padding: 0 9px 0 8px; }
    .account .alerts { gap: 4px; margin: 0 4px 0 -2px; }
    .account .user { width: 16px; height: 16px; border-radius: 50%; background: #f2f2f2; justify-content: center; }
    .ribbon { display: flex; height: 53px; background: #f2f2f2; border-bottom: 1px solid #dcdcdc; }
    .design { width: 72px; height: 40px; margin: 6px 0 0 7px; justify-content: center; gap: 2px; border: 1px solid #dadada; border-radius: 2px; background: #f4f4f4; font-weight: 700; }
    .tabs { display: flex; gap: 10px; padding-left: 6px; }
    .tabs button { padding: 0 8px; height: 16px; border-bottom: 2px solid transparent; }
    .tabs button.on { color: #0696d7; border-color: #0696d7; font-weight: 700; }
    .groups { display: flex; }
    .group { display: flex; flex-direction: column; align-items: center; padding: 0 3px; }
    .group + .group { border-left: 1px solid #dcdcdc; }
    .icons { display: flex; height: 24px; }
    .icons button { width: 28px; justify-content: center; }
    .group > button { gap: 2px; height: 10px; padding: 0 3px; margin-top: 1px; }
    .canvas { display: grid; }
    .canvas > * { grid-area: 1 / 1; min-width: 0; }
    .scene { width: 100%; height: auto; }
    .overlay { display: grid; grid-template: auto 1fr auto / 1fr auto 1fr; padding: 3px; z-index: 1; }
    .left { grid-column: 1; }
    .panel { width: 194px; height: 16px; background: #f2f2f2; display: flex; align-items: center; padding: 0 1px 0 4px; color: #444; }
    .panel .title { flex: 1; margin-left: 6px; }
    .panel .bare { margin-left: 12px; }
    .grip { width: 2px; height: 8px; border: solid #999; border-width: 0 1px; margin-left: 4px; }
    .cube { grid-column: 3; grid-row: 1 / 3; justify-self: end; margin: 1px 8px 0 0; }
    .tree { padding: 1px 0 0 11px; }
    .tree li { display: flex; align-items: center; height: 16px; }
    .tree li.leaf { height: 15px; }
    .twist { width: 5px; margin-right: 7px; height: 8px; }
    .lv1 { padding-left: 11px; }
    .lv2 { padding-left: 23px; }
    .chip { display: flex; align-items: center; height: 13px; background: #f4f4f4; padding: 0 5px 0 3px; white-space: nowrap; }
    .eye { margin-right: 6px; }
    .label { margin-left: 8px; }
    .lit { display: flex; align-items: center; background: #959595; color: #fff; font-weight: 700; height: 11px; padding: 0 5px 0 3px; margin-left: -2px; }
    .lit .label { margin-left: 10px; }
    .radio { appearance: none; width: 9px; height: 9px; margin: 0 0 0 3px; border: 1px solid #888; border-radius: 50%; background: radial-gradient(#333 0 1px, #fff 3px); }
    .bottom { grid-row: 3; grid-column: 1; }
    .navbar { grid-row: 3; grid-column: 2; display: flex; align-items: center; height: 16px; padding: 0 4px 0 3px; gap: 5px; background: #f0f0f0; }
    .navbar button { gap: 2px; }
    .timeline { display: flex; align-items: center; height: 32px; padding: 0 9px 0 7px; background: linear-gradient(#ececec, #f6f6f6 60%, #e6e6e6); }
    .play { display: flex; gap: 7px; width: 87px; }
    .track { display: flex; justify-content: space-between; width: 214px; height: 22px; margin-right: -2px; }
    .track li { position: relative; height: 17px; padding-top: 4px; }
    .track li::after { content: ""; position: absolute; left: 5px; bottom: -3px; height: 4px; width: 16px; border: solid #aaa; border-width: 0 0 1px 1px; }
    .track li:last-child::after { width: 1px; border-bottom-width: 0; }
    .settings { margin-left: auto; }
  `;

  private row(n: Node) {
    const inner = html`${n.icon}<span class="label">${n.label}</span>`;
    return html`<li class="lv${n.level} ${n.leaf ? "leaf" : ""}">
      ${n.leaf ? html`<span class="twist"></span>` : html`<button class="twist" aria-label="Toggle ${n.label}">${n.open ? opened : closed}</button>`}
      <div class="chip">
        ${n.vis ? html`<button class="eye" aria-label="Visibility of ${n.label}">${n.vis === "on" ? eye : eyeOff}</button>` : ""}
        ${n.root ? html`<span class="lit">${inner}</span><input class="radio" type="radio" checked aria-label="Activate ${n.label}" />` : inner}
      </div>
    </li>`;
  }

  render() {
    const back = this.view === "back";
    return html`
      <header class="menubar">
        ${apple}
        <nav class="menus"><button class="app">Fusion 360</button>${["File", "Edit", "View", "Window", "Help"].map((m) => html`<button>${m}</button>`)}</nav>
        <div class="status">
          ${cloud}${airplay}${bluetooth}${wifi}<span class="power">${this.battery}${battery}</span>${calendar}<span class="clock">${this.time}</span>${search}${siri}${listGlyph}
        </div>
      </header>
      <main class="window">
        <div class="titlebar">
          <div class="lights"><span class="light"></span><span class="light min"></span><span class="light max"></span></div>
          <span>Autodesk Fusion 360 (Education License)</span>
        </div>
        <div class="appbar">
          <div class="quick">
            <button aria-label="Data panel">${gridGlyph}</button><button aria-label="File">${fileGlyph}${caret("#777")}</button><button aria-label="Save">${saveGlyph}</button>
            <div class="history"><button aria-label="Undo">${undoGlyph}${caret("#777")}</button><button aria-label="Redo">${redoGlyph}${caret("#999")}</button><button aria-label="Job status">${jobGlyph}</button></div>
          </div>
          <div class="doctab active"><button class="name">${cube(1)}Untitled*</button><button aria-label="Close Untitled">${closeGlyph}</button></div>
          <div class="doctab idle"><button class="name">${cube(0.6)}Superficie*(1)</button><button aria-label="Close Superficie">${closeGlyph}</button></div>
          <button class="add" aria-label="New design">${plusGlyph}</button>
          <div class="account">
            <button aria-label="Extensions">${wrench}</button><button class="alerts" aria-label="Notifications">${clock}1</button><button aria-label="Help">${help}</button><button class="user">MA</button>
          </div>
        </div>
        <div class="ribbon">
          <button class="design">DESIGN ${caret()}</button>
          <div>
            <div class="tabs">${["SOLID", "SURFACE", "SHEET METAL", "TOOLS"].map((t, i) => html`<button class=${i ? "" : "on"}>${t}</button>`)}</div>
            <div class="groups">
              ${ribbon.map(([name, ids]) => html`<section class="group">
                <div class="icons">${ids.map((id) => html`<button aria-label=${id}>${tools[id]}</button>`)}</div>
                <button>${name} ${caret()}</button>
              </section>`)}
            </div>
          </div>
        </div>
        <div class="canvas">
          <svg class="scene" viewBox="8 168 928 415" preserveAspectRatio="xMidYMid slice" role="img" aria-label="Model">${back ? sceneBack : sceneFront}</svg>
          <div class="overlay">
            <div class="left">
              <div class="panel">${rewind}<span class="title">BROWSER</span><button aria-label="Collapse browser">${minus}</button><span class="grip"></span></div>
              <ul class="tree">${(back ? treeBack : treeFront).map((n) => this.row(n))}</ul>
            </div>
            ${back ? cubeBack : cubeFront}
            <div class="panel bottom"><span class="title bare">COMMENTS</span><button aria-label="Add comment">${plusDot}</button><span class="grip"></span></div>
            <div class="navbar">
              <button aria-label="Orbit">${nav.orbit}${caret()}</button><button aria-label="Look at">${nav.look}</button><button aria-label="Pan">${nav.pan}</button>
              <button aria-label="Zoom">${nav.zoom}</button><button aria-label="Fit">${nav.fit}${caret()}</button><button aria-label="Display">${nav.display}${caret()}</button>
              <button aria-label="Grid">${nav.grid}${caret()}</button><button aria-label="Viewports">${nav.views}${caret()}</button>
            </div>
          </div>
        </div>
        <footer class="timeline">
          <div class="play">${play.map(([n, g]) => html`<button aria-label=${n}>${g}</button>`)}</div>
          <ul class="track">${features.map((x) => html`<li>${x}</li>`)}</ul>
          ${marker}
          <button class="settings" aria-label="Timeline settings">${gear("#777")}</button>
        </footer>
      </main>`;
  }
}

@customElement("app-root")
class AppRoot extends LitElement {
  static styles = css`
    :host { display: flex; align-items: flex-start; gap: 46px; padding: 64px 0; background: #fff; }
  `;
  render() {
    return html`
      <fusion-screen view="back" battery="94 %" time="Dom 18:16"></fusion-screen>
      <fusion-screen view="front" battery="98 %" time="Dom 18:25"></fusion-screen>`;
  }
}
